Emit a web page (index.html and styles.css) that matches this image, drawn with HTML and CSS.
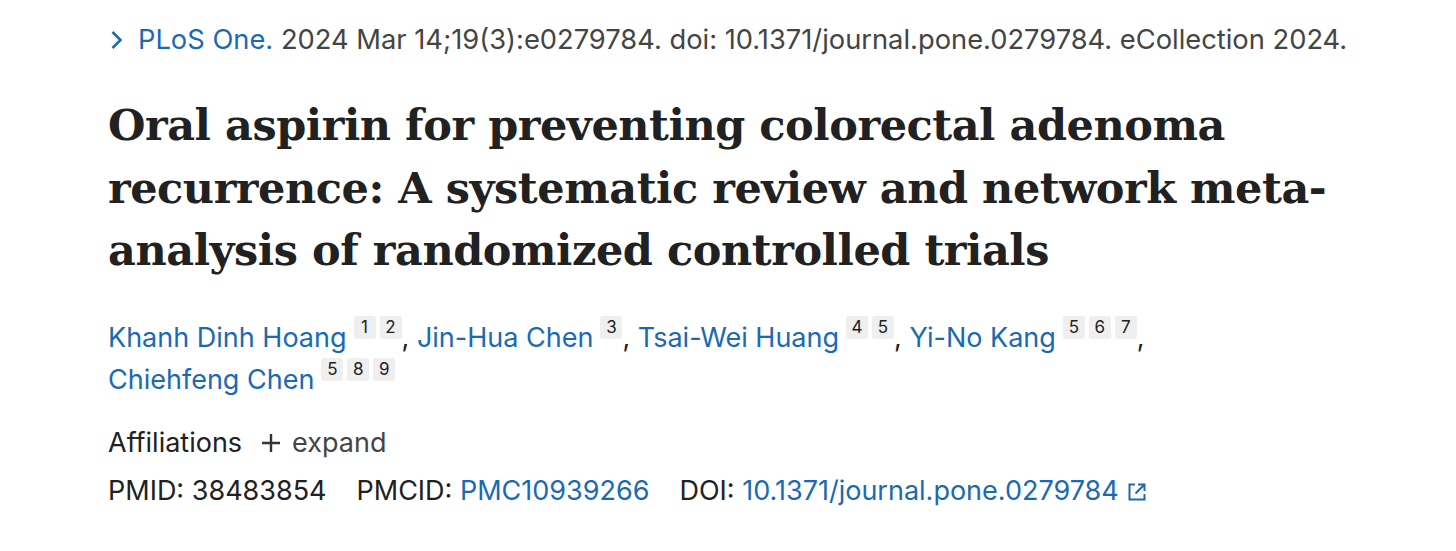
FILE: index.html
```html
<!DOCTYPE html>
<html lang="en">
<head>
<meta charset="utf-8">
<title>Oral aspirin for preventing colorectal adenoma recurrence</title>
<link rel="stylesheet" href="styles.css">
</head>
<body>
<main class="article">
  <div class="citation">
    <a class="journal" href="#"><svg class="chev" viewBox="0 0 14 22" width="14" height="22"><path d="M2.5 3 L10.5 11 L2.5 19" fill="none" stroke="#1a6ab3" stroke-width="2.6"/></svg><span>PLoS One.</span></a>
    <span class="cit-text">2024 Mar 14;19(3):e0279784. doi: 10.1371/journal.pone.0279784. eCollection 2024.</span>
  </div>
  <h1 class="title">Oral aspirin for preventing colorectal adenoma recurrence: A systematic review and network meta-analysis of randomized controlled trials</h1>
  <div class="authors">
    <span class="author"><a href="#">Khanh Dinh Hoang</a><sup class="refs"><span class="ref">1</span><span class="ref">2</span></sup></span>,
    <span class="author"><a href="#">Jin-Hua Chen</a><sup class="refs"><span class="ref">3</span></sup></span>,
    <span class="author"><a href="#">Tsai-Wei Huang</a><sup class="refs"><span class="ref">4</span><span class="ref">5</span></sup></span>,
    <span class="author"><a href="#">Yi-No Kang</a><sup class="refs"><span class="ref">5</span><span class="ref">6</span><span class="ref">7</span></sup></span>,
    <span class="author"><a href="#">Chiehfeng Chen</a><sup class="refs"><span class="ref">5</span><span class="ref">8</span><span class="ref">9</span></sup></span>
  </div>
  <div class="affiliations">
    <span class="aff-label">Affiliations</span>
    <span class="expand"><svg class="plus" viewBox="0 0 22 22" width="22" height="22"><path d="M11 2 V20 M2 11 H20" stroke="#333" stroke-width="2.4"/></svg>expand</span>
  </div>
  <div class="ids">
    <span class="id">PMID: <span class="plain">38483854</span></span>
    <span class="id">PMCID: <a href="#">PMC10939266</a></span>
    <span class="id">DOI: <a href="#">10.1371/journal.pone.0279784<svg class="ext" viewBox="0 0 20 20" width="20" height="20"><path d="M8 2.5 H2.5 V17.5 H17.5 V12 M11 2.5 H17.5 V9 M17.5 2.5 L8.5 11.5" fill="none" stroke="#1a6ab3" stroke-width="2"/></svg></a></span>
  </div>
</main>
</body>
</html>
```

FILE: styles.css
```css
html, body {
  margin: 0;
  padding: 0;
  background: #ffffff;
}

body {
  font-family: Inter, "Liberation Sans", Arial, sans-serif;
  color: #212121;
}

a {
  color: #1a6ab3;
  text-decoration: none;
}

.article {
  padding: 22px 0 0 108px;
  width: 1250px;
}

.citation {
  font-size: 27.3px;
  line-height: 36px;
  color: #444444;
  white-space: nowrap;
}

.journal {
  display: inline-flex;
  align-items: center;
  margin-left: 2px;
  vertical-align: -2px;
}

.chev {
  margin-right: 14px;
}

.title {
  margin: 36px 0 0 0;
  font-family: "DejaVu Serif", "Liberation Serif", serif;
  font-weight: bold;
  font-size: 43px;
  line-height: 62.5px;
  color: #212121;
  letter-spacing: -0.45px;
}

.authors {
  margin-top: 34px;
  font-size: 27px;
  line-height: 41.5px;
  color: #212121;
}

.author {
  white-space: nowrap;
}

.refs {
  display: inline-flex;
  gap: 4px;
  vertical-align: 14px;
  margin-left: 7px;
  font-size: 17px;
  line-height: 1;
}

.ref {
  display: inline-block;
  min-width: 22px;
  height: 23px;
  line-height: 23px;
  text-align: center;
  background: #efefef;
  border-radius: 3px;
  color: #212121;
}

.affiliations {
  margin-top: 21px;
  font-size: 27px;
  line-height: 42px;
  display: flex;
  align-items: center;
  gap: 18px;
}

.expand {
  display: inline-flex;
  align-items: center;
  gap: 10px;
  color: #444444;
}

.ids {
  margin-top: 6px;
  font-size: 27px;
  line-height: 42px;
  display: flex;
  gap: 30px;
  color: #212121;
}

.ext {
  margin-left: 8px;
  vertical-align: -2px;
}
```
